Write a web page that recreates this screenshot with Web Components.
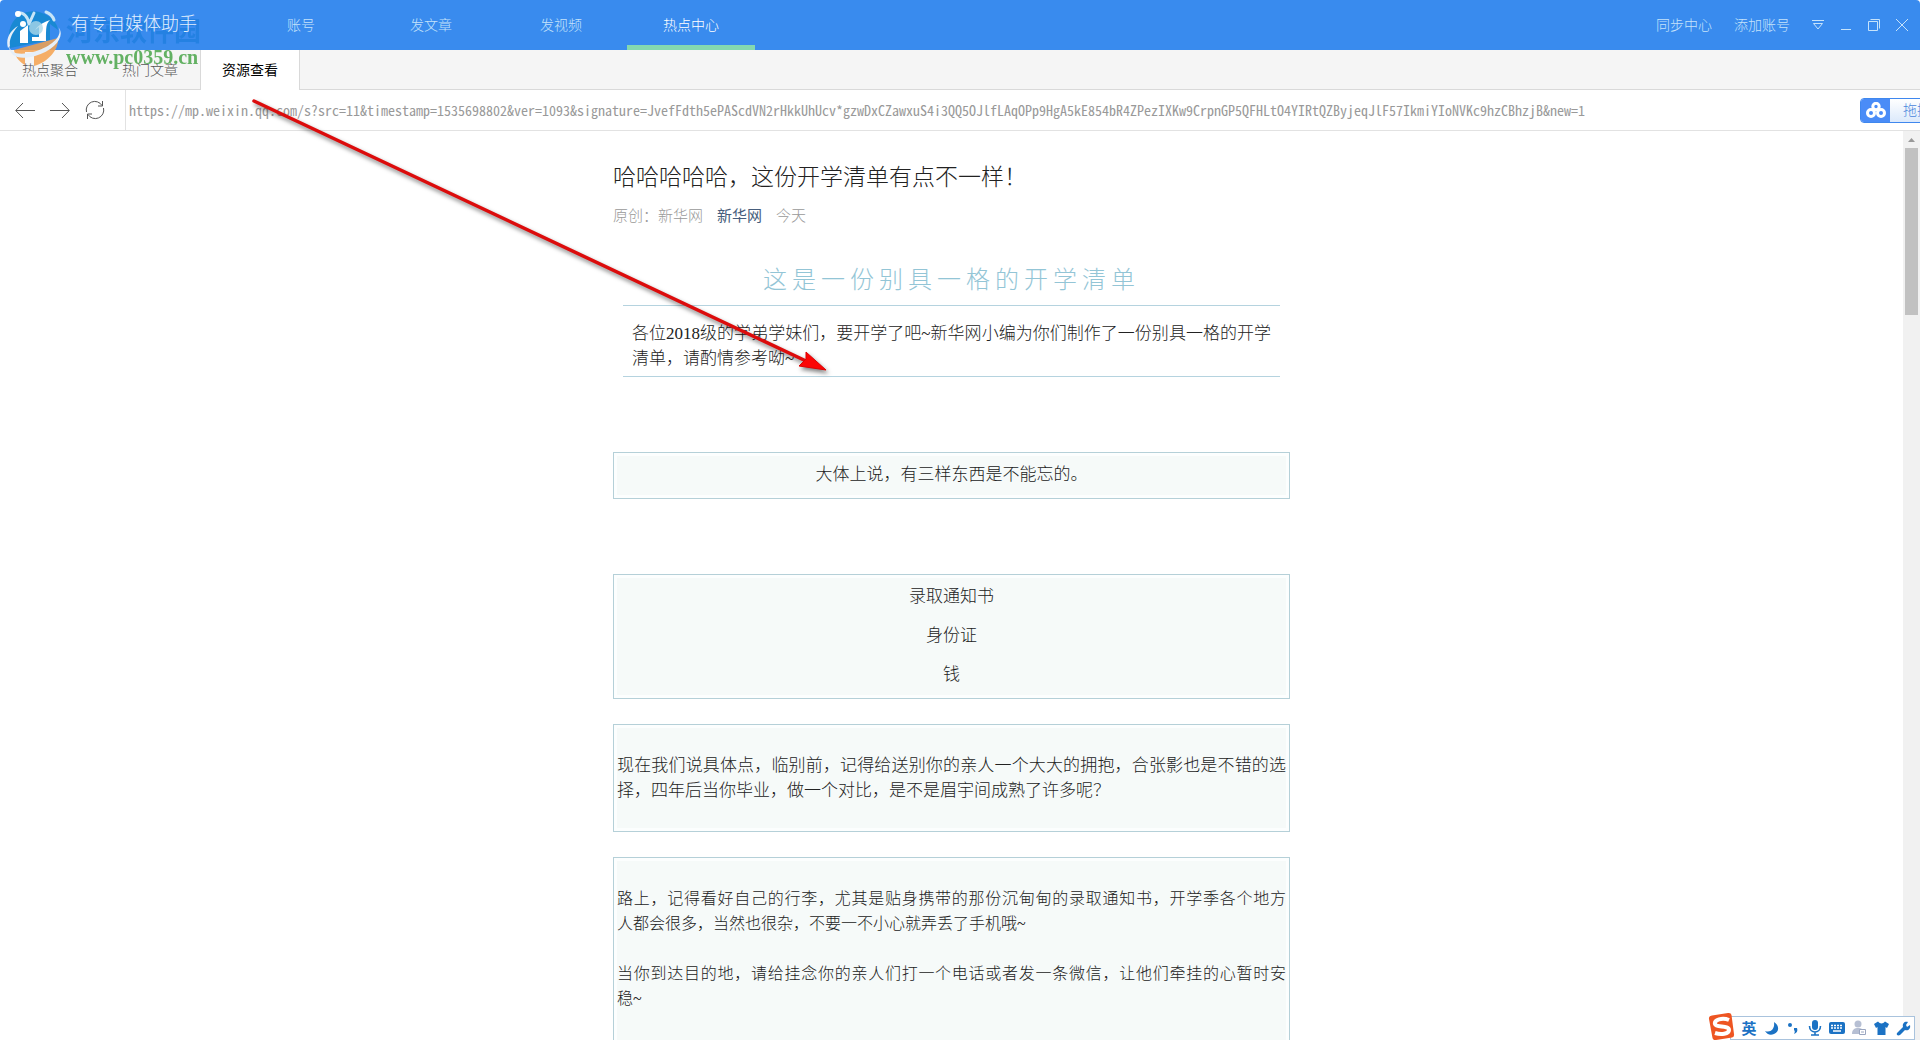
<!DOCTYPE html>
<html lang="zh-CN">
<head>
<meta charset="utf-8">
<title>有专自媒体助手</title>
<style>
html,body{margin:0;height:100%;overflow:hidden;background:#fff}
body{font:14px/20px "Liberation Sans","Noto Sans CJK SC",sans-serif;color:#333}
</style>
</head>
<body>
<media-app></media-app>
<script>
const define=(name,html)=>{
  const t=document.createElement('template');
  t.innerHTML='<style>*{box-sizing:border-box}:host{display:block;box-sizing:border-box}</style>'+html;
  customElements.define(name,class extends HTMLElement{
    constructor(){super();this.attachShadow({mode:'open'}).append(t.content.cloneNode(true));}
  });
};

define('site-watermark',`<style>
:host{position:absolute;left:6px;top:10px;pointer-events:none;display:flex;gap:4px}
.t{display:flex;flex-direction:column;padding-top:3px;white-space:nowrap}
.a{font:bold 27px/34px "Noto Sans CJK SC",sans-serif;color:#1f7fe0;opacity:.8}
.b{font:bold 20px/20px "Liberation Serif",serif;color:#50a850;opacity:.88}
svg{flex:none}
</style>
<svg width="56" height="58" viewBox="0 0 56 58" aria-hidden="true">
<path d="M3 26A24 24 0 0 1 36 3C45 6 52 14 52 20L44 14V30L4 38Z" fill="#1688cf" opacity=".9"/>
<path d="M8 40L52 28C53 40 42 52 28 56V42H19V55C12 51 9 46 8 40Z" fill="#f4a14d" opacity=".85"/>
<path d="M52 17C58 25 46 37 27 42C12 46 1 43 3 31C1 48 14 50 29 46C50 40 60 25 52 17Z" fill="#e6eff8"/>
<path d="M2 38C-1 28 5 20 12 16C5 24 3 31 4 36Z" fill="#e6eff8"/>
<path d="M14 21L22 15V33H14ZM26 27H33V17L29 20C33 14 39 12 44 10C40 14 40 17 40 31H33V31H26Z" fill="#fff"/>
<path d="M11 3C18 2 22 7 23 14M28 3L23 14M40 2C45 4 47 7 48 10" fill="none" stroke="#c7e5f7" stroke-width="3" stroke-linecap="round"/>
<circle cx="30" cy="18" r="7" fill="#a9d7e8" opacity=".8"/><circle cx="12" cy="4" r="3" fill="#fff"/><circle cx="17" cy="14" r="3" fill="#fff"/>
</svg><span class="t"><span class="a">河东软件园</span><span class="b">www.pc0359.cn</span></span>`);

define('app-header',`<style>
:host{background:#398bee;height:50px;border-radius:4px 4px 0 0;display:flex;justify-content:space-between;color:#c6e3fb}
.nav,.right,.win{display:flex;align-items:center}
.brand{position:relative;z-index:1;width:237px;padding:12px 0 0 71px;font-size:18px;font-weight:300;line-height:24px;color:#e2f0fe}
.nav{flex:1;align-items:stretch;gap:2px}
.nav a{width:128px;text-align:center;line-height:50px;color:inherit;text-decoration:none;font-weight:300}
.nav a.on{color:#fff;box-shadow:inset 0 -5px #84d8b0}
button{all:unset;cursor:default;display:flex;font-weight:300}
.right{gap:22px;padding-right:12px}
.win{gap:16px}
</style>
<div class="brand">有专自媒体助手</div>
<nav class="nav"><a href="#">账号</a><a href="#">发文章</a><a href="#">发视频</a><a href="#" class="on">热点中心</a></nav>
<div class="right"><button>同步中心</button><button>添加账号</button>
<div class="win">
<button aria-label="菜单"><svg width="12" height="12" fill="none" stroke="#c6e3fb"><path d="M0 1.5H12M1.5 4.5H10.5L6 10Z"/></svg></button>
<button aria-label="最小化"><svg width="12" height="12" stroke="#c6e3fb"><path d="M1 10.5H11"/></svg></button>
<button aria-label="还原"><svg width="12" height="12" fill="none" stroke="#c6e3fb"><path d="M.5 2.5H9.5V11.5H.5ZM2.5 .5H11.5V9.5"/></svg></button>
<button aria-label="关闭"><svg width="12" height="12" stroke="#c6e3fb"><path d="M0 0L12 12M12 0L0 12"/></svg></button>
</div></div>`);

define('sub-tabs',`<style>
:host{display:flex;height:40px;background:#f5f5f5;border-bottom:1px solid #d9d9d9}
a{position:relative;z-index:1;width:100px;height:40px;text-align:center;line-height:40px;color:#555;text-decoration:none;font-weight:300}
a.on{background:#fff;color:#000;border:solid #d9d9d9;border-width:0 1px;font-weight:400}
</style><a href="#">热点聚合</a><a href="#">热门文章</a><a href="#" class="on">资源查看</a>`);

define('address-bar',`<style>
:host{display:flex;height:41px;background:#fff;border-bottom:1px solid #e2e2e2}
.tools{display:flex;align-items:center;gap:15px;width:126px;padding-left:15px;border-right:1px solid #e2e2e2}
button{all:unset;display:flex}
input{flex:1;min-width:0;border:0;outline:0;padding:0 3px;background:none;color:#999;font:300 14px/20px "Noto Sans Mono CJK SC","Liberation Mono",monospace}
.drop{width:60px;overflow:hidden;display:flex;align-items:center}
.drop button{flex:none;box-sizing:border-box;width:120px;height:25px;border:1px solid #3f87ee;border-radius:4px;background:linear-gradient(#fff,#dbe9fb);color:#4a87dc;font-size:14px;font-weight:300;line-height:20px;overflow:hidden;align-items:center;gap:13px}
.ic{width:29px;height:25px;background:#4a8cf7;display:flex;align-items:center;justify-content:center}
</style>
<div class="tools">
<button aria-label="后退"><svg width="20" height="16" fill="none" stroke="#555"><path d="M20 8.5H1M8 1L.7 8.5L8 16"/></svg></button>
<button aria-label="前进"><svg width="20" height="16" fill="none" stroke="#555"><path d="M0 8.5H19M12 1L19.3 8.5L12 16"/></svg></button>
<button aria-label="刷新"><svg width="20" height="20" fill="none" stroke="#555"><path d="M1.5 12A8.5 8.5 0 0 1 17 5.5M18.5 8A8.5 8.5 0 0 1 3 14.5M17.5 1V6H13M2.500 19V14H7"/></svg></button>
</div>
<input type="text" aria-label="网址" readonly value="https://mp.weixin.qq.com/s?src=11&amp;timestamp=1535698802&amp;ver=1093&amp;signature=JvefFdth5ePAScdVN2rHkkUhUcv*gzwDxCZawxuS4i3QQ5OJlfLAqOPp9HgA5kE854bR4ZPezIXKw9CrpnGP5QFHLtO4YIRtQZByjeqJlF57IkmiYIoNVKc9hzCBhzjB&amp;new=1">
<div class="drop"><button><span class="ic"><svg width="20" height="16" fill="none" stroke="#fff" stroke-width="3"><circle cx="10" cy="4.500" r="3.200"/><circle cx="5" cy="11" r="3.500"/><circle cx="15" cy="11" r="3.500"/></svg></span>拖拽上传</button></div>`);

define('note-box',`<style>
:host{border:1px solid #b5d0d8;padding:9px 3px 11px;background:#f6faf9;box-shadow:inset 0 0 0 3px #fcfefe;display:flex;flex-direction:column;gap:14px;text-align:center}
:host([wide]){padding:28px 3px;text-align:justify;gap:25px}
</style><slot></slot>`);

define('news-article',`<style>
:host{width:677px;padding-top:32px;font:17px/25px "Liberation Serif","Noto Sans CJK SC",sans-serif;color:#222}
h1,h2,p{margin:0;font-weight:300}
h1{font-size:23px;line-height:30px}
.meta{display:flex;gap:14px;font-size:15px;font-weight:300;line-height:24px;margin-top:11px;color:#999}
.meta a{color:#465d7c;text-decoration:none;font-weight:400}
.intro{margin:34px 10px 75px;text-align:center}
h2{font-size:24px;letter-spacing:5px;line-height:36px;color:#93c5d6;padding-bottom:7px;border-bottom:1px solid #b5d3df}
.intro p{padding:15px 9px 5px;text-align:justify;border-bottom:1px solid #b5d3df}
note-box{margin-bottom:25px}
.far{margin-bottom:75px}
.small{font-size:16px}
.full{display:block;text-align-last:justify}
</style>
<h1>哈哈哈哈哈，这份开学清单有点不一样！</h1>
<div class="meta"><span>原创：新华网</span><a href="#">新华网</a><span>今天</span></div>
<section class="intro"><h2>这是一份别具一格的开学清单</h2>
<p>各位2018级的学弟学妹们，要开学了吧~新华网小编为你们制作了一份别具一格的开学清单，请酌情参考呦~</p></section>
<note-box class="far"><p>大体上说，有三样东西是不能忘的。</p></note-box>
<note-box><p>录取通知书</p><p>身份证</p><p>钱</p></note-box>
<note-box wide><p>现在我们说具体点，临别前，记得给送别你的亲人一个大大的拥抱，合张影也是不错的选择，四年后当你毕业，做一个对比，是不是眉宇间成熟了许多呢？</p></note-box>
<note-box wide class="small"><p><span class="full">路上，记得看好自己的行李，尤其是贴身携带的那份沉甸甸的录取通知书，开学季各个地方</span>人都会很多，当然也很杂，不要一不小心就弄丢了手机哦~</p><p><span class="full">当你到达目的地，请给挂念你的亲人们打一个电话或者发一条微信，让他们牵挂的心暂时安</span>稳~</p><p><br></p></note-box>`);

define('page-scrollbar',`<style>
:host{width:17px;background:#f1f1f1;display:flex;flex-direction:column;align-items:center}
svg{flex:none}
.thumb{width:13px;height:167px;background:#c1c1c1}
</style><svg width="17" height="17"><path d="M5 11L8.500 7L12 11Z" fill="#999"/></svg><div class="thumb"></div>`);

define('ime-bar',`<style>
:host{position:absolute;right:5px;bottom:0;height:24px;width:185px;border:1px solid #a9c3dd;background:#fff;display:flex;align-items:center;padding-left:7px;font:bold 15px/22px "Noto Sans CJK SC",sans-serif;color:#1b72c4}
:host>*{flex:none}
.s{position:absolute;left:-24px;top:-5px}
.i{width:22px;display:flex;justify-content:center;flex:none}
</style>
<svg class="s" width="30" height="30" viewBox="0 0 30 30" aria-hidden="true"><path d="M2 7Q1.500 4 5 3.500L21 1Q24 .5 24.500 3L27 22Q27.500 25 25 25.500L9 28Q6 28.500 5.500 26Z" fill="#ee5522"/><path d="M22 8C15 5 7 8 8 12C9 16 22 13 22 18C22 22 14 23 8 21" fill="none" stroke="#fff" stroke-width="4"/></svg>
<span class="i">英</span>
<span class="i"><svg width="15" height="15"><path d="M10 1C16 5 15 11 10 13C6 15 3 13 1 10C7 12 11 8 10 1Z" fill="#1b72c4"/></svg></span>
<span class="i"><svg width="12" height="14"><circle cx="3" cy="4" r="2" fill="#1b72c4"/><path d="M7 7H10C11 10 10 12 7 13C8 11 8 10 7 9Z" fill="#1b72c4"/></svg></span>
<span class="i"><svg width="14" height="16"><rect x="4" width="6" height="10" rx="3" fill="#1b72c4"/><path d="M1.500 6C1.500 14 12.500 14 12.500 6M7 12V15M3 15H11" fill="none" stroke="#1b72c4" stroke-width="1.600"/></svg></span>
<span class="i"><svg width="16" height="12"><rect width="16" height="12" rx="2" fill="#1b72c4"/><path d="M2 3.500H14M2 6H14" stroke="#fff" stroke-width="1.500" stroke-dasharray="2 1"/><path d="M4 9H12" stroke="#fff" stroke-width="1.500"/></svg></span>
<span class="i"><svg width="16" height="16"><circle cx="7" cy="4" r="3.500" fill="#b6bfd3"/><path d="M1 14C1 9 4 8 7 8S13 9 13 14Z" fill="#b6bfd3"/><path d="M8.500 9.500H14.500V14.500H8.500ZM10 12H13" fill="#fff" stroke="#9aa6c0"/></svg></span>
<span class="i"><svg width="15" height="14"><path d="M0 3L4 .5C6 3 9 3 11 .5L15 3L13 7L11.500 6V14H3.500V6L2 7Z" fill="#1b72c4"/></svg></span>
<span class="i"><svg width="15" height="15"><path d="M1 12L7 6C6 2 9 0 12 1L10 4L11 6L14 4C15 8 12 10 9 9L4 14C2 15 0 14 1 12Z" fill="#1b72c4"/></svg></span>`);

define('pointer-arrow',`<style>
:host{position:absolute;z-index:2;left:240px;top:90px;pointer-events:none;filter:drop-shadow(2px 3px 2px rgba(0,0,0,.5))}
svg{display:block}
</style><svg width="600" height="300" aria-hidden="true"><path d="M14 11L566 271" stroke="#dc0c0c" stroke-width="3.500" stroke-linecap="round"/><path d="M586 280L566 262L566 269L559 276Z" fill="#fb0505" stroke="#d00" stroke-linejoin="round"/></svg>`);

define('media-app',`<style>
:host{position:relative;height:100vh;overflow:hidden;display:flex;flex-direction:column}
:host>*{flex:none}
main{flex:1;min-height:0;display:flex}
.view{flex:1;min-width:0;overflow:hidden;display:flex;justify-content:center}
</style>
<app-header></app-header><sub-tabs></sub-tabs><address-bar></address-bar>
<main><div class="view"><news-article></news-article></div><page-scrollbar></page-scrollbar></main>
<site-watermark></site-watermark><pointer-arrow></pointer-arrow><ime-bar></ime-bar>`);
</script>
</body>
</html>
